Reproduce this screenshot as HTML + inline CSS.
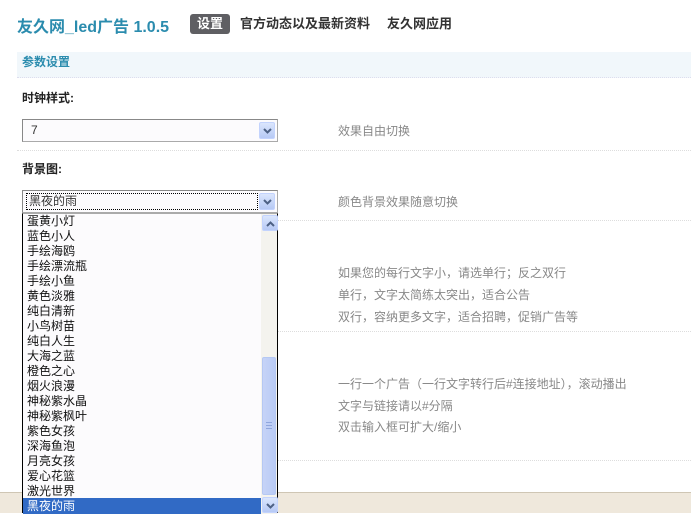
<!DOCTYPE html>
<html><head><meta charset="utf-8"><style>
*{margin:0;padding:0;box-sizing:border-box}
body{width:691px;height:513px;overflow:hidden;background:#fff;font-family:"Liberation Sans","Noto Sans CJK SC",sans-serif;font-size:12px;position:relative;color:#333}
.a{position:absolute;white-space:nowrap}
.title{left:17px;top:13px;font-size:16px;font-weight:bold;color:#2b8cae}
.tab{top:14px;height:20px;line-height:20px;font-size:13px;font-weight:bold;color:#333}
.sel{left:190px;width:40px;background:#5f5f63;color:#fff;border-radius:3px;text-align:center}
.hdr{left:17px;top:52px;width:674px;height:26px;background:#f1f7fb;color:#2b8cae;font-weight:bold;font-size:12px;line-height:18px;padding-left:5px;border-bottom:1px dotted #dde}
.lbl{left:22px;font-weight:bold;font-size:12px;color:#222}
.dot{left:17px;width:674px;border-top:1px dotted #ddd;height:0}
.desc{left:338px;color:#888;font-size:12px}
.box{left:22px;width:256px;height:23px;border:1px solid #7f9db9;border-color:#888 #aaa #aaa #888;background:#fcfbfd}
.btn{position:absolute;right:2px;top:2px;width:16px;height:17px;background:linear-gradient(#dbe6fd,#b6c9f5);border:1px solid #c3d3fd;border-radius:2px}
.btn svg{position:absolute;left:3px;top:4px}
.list{left:22px;top:213px;width:256px;height:300px;border:1px solid #000;border-top-color:#aaa;background:#fcfbfd}
.item{position:absolute;left:4px;font-size:12px;color:#111;line-height:15px}
</style></head><body>
<div class="a title">友久网_led广告 1.0.5</div>
<div class="a tab sel">设置</div>
<div class="a tab" style="left:240px">官方动态以及最新资料</div>
<div class="a tab" style="left:387px">友久网应用</div>
<div class="a hdr" style="line-height:18px;padding-top:1px">参数设置</div>
<div class="a lbl" style="top:89px">时钟样式:</div>
<div class="a box" style="top:119px"><span style="position:absolute;left:8px;top:3px;font-size:12px">7</span><div class="btn"><svg width="9" height="8"><path d="M1 2 L4.5 5.5 L8 2" stroke="#4d6185" stroke-width="2" fill="none"/></svg></div></div>
<div class="a desc" style="top:122px">效果自由切换</div>
<div class="a dot" style="top:150px"></div>
<div class="a lbl" style="top:160px">背景图:</div>
<div class="a box" style="top:190px"><span style="position:absolute;left:3px;top:2px;width:232px;height:17px;border:1px dotted #000;padding-left:2px;line-height:15px">黑夜的雨</span><div class="btn"><svg width="9" height="8"><path d="M1 2 L4.5 5.5 L8 2" stroke="#4d6185" stroke-width="2" fill="none"/></svg></div></div>
<div class="a desc" style="top:193px">颜色背景效果随意切换</div>
<div class="a dot" style="top:220px;left:278px;width:413px"></div>
<div class="a desc" style="top:264px">如果您的每行文字小，请选单行；反之双行</div>
<div class="a desc" style="top:286px">单行，文字太简练太突出，适合公告</div>
<div class="a desc" style="top:308px">双行，容纳更多文字，适合招聘，促销广告等</div>
<div class="a dot" style="top:331px;left:278px;width:413px"></div>
<div class="a desc" style="top:375px">一行一个广告（一行文字转行后#连接地址），滚动播出</div>
<div class="a desc" style="top:397px">文字与链接请以#分隔</div>
<div class="a desc" style="top:418px">双击输入框可扩大/缩小</div>
<div class="a dot" style="top:460px;left:278px;width:413px"></div>
<div class="a" style="left:0;top:492px;width:691px;height:21px;background:#efe8dc;border-top:1px solid #cfc6b4"></div>
<div class="a list">
<div class="item" style="top:0">蛋黄小灯</div>
<div class="item" style="top:15px">蓝色小人</div>
<div class="item" style="top:30px">手绘海鸥</div>
<div class="item" style="top:45px">手绘漂流瓶</div>
<div class="item" style="top:60px">手绘小鱼</div>
<div class="item" style="top:75px">黄色淡雅</div>
<div class="item" style="top:90px">纯白清新</div>
<div class="item" style="top:105px">小鸟树苗</div>
<div class="item" style="top:120px">纯白人生</div>
<div class="item" style="top:135px">大海之蓝</div>
<div class="item" style="top:150px">橙色之心</div>
<div class="item" style="top:165px">烟火浪漫</div>
<div class="item" style="top:180px">神秘紫水晶</div>
<div class="item" style="top:195px">神秘紫枫叶</div>
<div class="item" style="top:210px">紫色女孩</div>
<div class="item" style="top:225px">深海鱼泡</div>
<div class="item" style="top:240px">月亮女孩</div>
<div class="item" style="top:255px">爱心花篮</div>
<div class="item" style="top:270px">激光世界</div>
<div style="position:absolute;left:0;top:284px;width:238px;height:16px;background:#316ac5"></div>
<div class="item" style="top:285px;color:#fff">黑夜的雨</div>
<div style="position:absolute;left:238px;top:0;width:16px;height:300px;background:#f4f3ee"></div>
<div class="btn" style="left:239px;right:auto;top:1px;height:16px"><svg width="9" height="8"><path d="M1 6 L4.5 2.5 L8 6" stroke="#4d6185" stroke-width="2" fill="none"/></svg></div>
<div style="position:absolute;left:239px;top:143px;width:14px;height:138px;background:linear-gradient(90deg,#c6d3f7,#b9cbf5);border:1px solid #b5c8f3;border-radius:2px"><div style="position:absolute;left:3px;top:64px;width:6px;height:7px;border-top:1px solid #8fa6dd;border-bottom:1px solid #8fa6dd"><div style="margin-top:2px;border-top:1px solid #8fa6dd"></div></div></div>
<div class="btn" style="left:239px;right:auto;top:283px;height:16px"><svg width="9" height="8"><path d="M1 2 L4.5 5.5 L8 2" stroke="#4d6185" stroke-width="2" fill="none"/></svg></div>
</div>
</body></html>
